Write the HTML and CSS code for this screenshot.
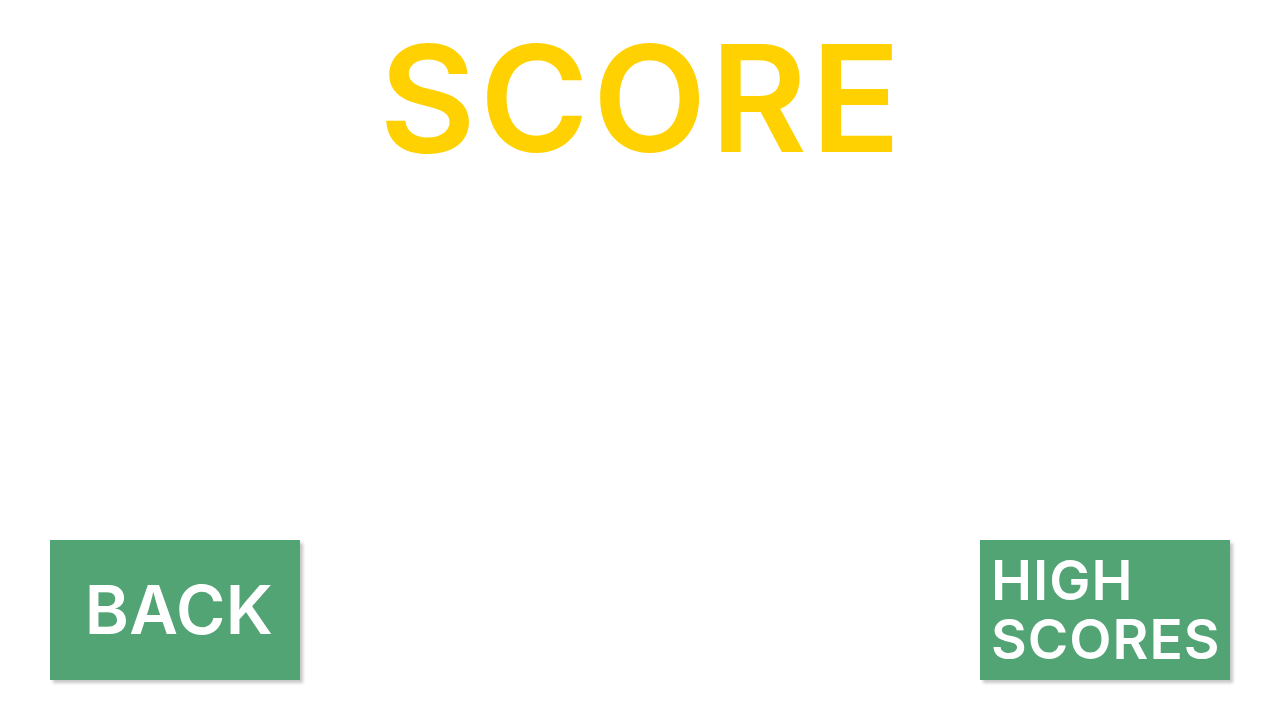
FILE: index.html
```html
<!DOCTYPE html>
<html lang="en">
<head>
<meta charset="utf-8">
<title>Score</title>
<link rel="stylesheet" href="styles.css">
</head>
<body>
<main class="screen">
  <h1 class="title">SCORE</h1>
  <div class="spacer"></div>
  <div class="actions">
    <button class="btn btn-back">BACK</button>
    <button class="btn btn-high"><span class="line">HIGH</span><span class="line">SCORES</span></button>
  </div>
</main>
</body>
</html>
```

FILE: styles.css
```css
html, body {
  margin: 0;
  padding: 0;
  background: #ffffff;
}

.screen {
  width: 1280px;
  height: 720px;
  display: flex;
  flex-direction: column;
  font-family: Inter, "Noto Sans", sans-serif;
}

.title {
  margin: 0;
  padding-top: 27px;
  padding-left: 4px;
  text-align: center;
  font-size: 148px;
  line-height: 144px;
  font-weight: 600;
  color: #ffd100;
  letter-spacing: 4px;
}

.spacer {
  flex: 1;
}

.actions {
  display: flex;
  justify-content: space-between;
  padding: 0 50px 40px;
}

.btn {
  width: 250px;
  height: 140px;
  border: none;
  margin: 0;
  background: #52a475;
  color: #ffffff;
  font-family: Inter, "Noto Sans", sans-serif;
  font-weight: 600;
  box-shadow: 3px 3px 3px rgba(0, 0, 0, 0.22);
  display: flex;
  align-items: center;
  cursor: pointer;
}

.btn-back {
  justify-content: center;
  font-size: 67px;
  line-height: 66px;
  letter-spacing: 0.5px;
  padding: 0 0 0 8px;
}

.btn-high {
  flex-direction: column;
  justify-content: center;
  align-items: flex-start;
  text-align: left;
  font-size: 55px;
  letter-spacing: 1px;
  padding: 0 0 0 11px;
}

.line {
  display: block;
  line-height: 59px;
}
```
